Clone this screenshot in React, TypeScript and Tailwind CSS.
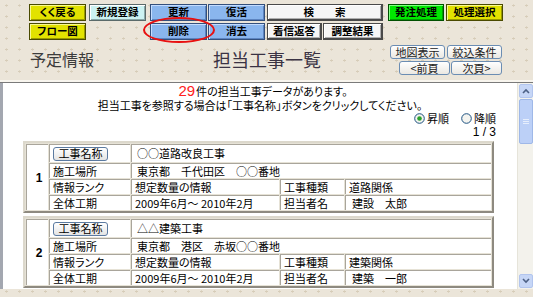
import React from 'react';

const yellow =
  'bg-[#e2e200] border-[#4a4a00] shadow-[inset_1px_1px_0_#f8f890,inset_-1px_-1px_0_#9a9a00]';
const cyan =
  'bg-[#ccf2f2] border-[#5a6a6a] shadow-[inset_1px_1px_0_#ffffff,inset_-1px_-1px_0_#8aa8a8]';
const blue =
  'bg-[#8ab6ee] border-[#34507c] shadow-[inset_1px_1px_0_#c4dcff,inset_-1px_-1px_0_#5c84c0]';
const gray =
  'bg-[#f6f6f6] border-[#4a4a4a] border-r-2 border-b-2 shadow-[inset_1px_1px_0_#ffffff,inset_-1px_-1px_0_#b0b0b0]';
const green =
  'bg-[#00e800] border-[#005000] shadow-[inset_1px_1px_0_#80ff80,inset_-1px_-1px_0_#00a000]';

const Btn: React.FC<{ className: string; children: React.ReactNode }> = ({ className, children }) => (
  <div
    className={`h-[17px] flex items-center justify-center border text-[10.5px] font-bold leading-none text-black whitespace-nowrap ${className}`}
  >
    {children}
  </div>
);

const SmallBtn: React.FC<{ className: string; children: React.ReactNode }> = ({ className, children }) => (
  <div
    className={`h-[14px] flex items-center justify-center rounded-[3px] border border-[#6b8db3] bg-gradient-to-b from-white to-[#ebe8e2] text-[11px] leading-none text-[#222] ${className}`}
  >
    {children}
  </div>
);

const Radio: React.FC<{ checked?: boolean }> = ({ checked }) => (
  <svg width="11" height="11" viewBox="0 0 11 11">
    <circle cx="5.5" cy="5.5" r="4.8" fill="#f4f4f0" stroke="#1c5180" strokeWidth="1" />
    {checked && <circle cx="5.5" cy="5.5" r="2.3" fill="#2aa22a" />}
  </svg>
);

const data = [
  { no: 1, name: '○○道路改良工事', place: '東京都　千代田区　○○番地', kind: '道路関係', person: '建設　太郎' },
  { no: 2, name: '△△建築工事', place: '東京都　港区　赤坂○○番地', kind: '建築関係', person: '建築　一郎' },
];

const td = 'bg-white border-t border-l border-[#a9a59b] p-0 pl-[3px] text-[11px] leading-none align-middle whitespace-nowrap overflow-hidden';

const WorkTable: React.FC<{ row: (typeof data)[number] }> = ({ row }) => (
  <table className="table-fixed border-separate border-spacing-[1px] w-[471px] bg-[#e6e2d6] border-2 border-t-[#dcd8cc] border-l-[#dcd8cc] border-b-[#8e8a80] border-r-[#8e8a80]">
    <colgroup>
      <col className="w-[22px]" />
      <col className="w-[81px]" />
      <col className="w-[148px]" />
      <col className="w-[64px]" />
      <col />
    </colgroup>
    <tbody>
      <tr className="h-[18px]">
        <td rowSpan={4} className={`${td} pl-0 text-center font-bold text-[12px] font-['Liberation_Sans',sans-serif]`}>
          {row.no}
        </td>
        <td className={`${td} pl-[2px]`}>
          <div className="w-[55px] h-[14px] flex items-center justify-center rounded-[3px] border border-[#5b7aa0] bg-gradient-to-b from-white to-[#e4e4e4] text-[11px] leading-none">
            工事名称
          </div>
        </td>
        <td colSpan={3} className={`${td} pl-[5px]`}>
          {row.name}
        </td>
      </tr>
      <tr className="h-[15px]">
        <td className={td}>施工場所</td>
        <td colSpan={3} className={`${td} pl-[5px]`}>
          {row.place}
        </td>
      </tr>
      <tr className="h-[15px]">
        <td className={td}>情報ランク</td>
        <td className={td}>想定数量の情報</td>
        <td className={td}>工事種類</td>
        <td className={td}>{row.kind}</td>
      </tr>
      <tr className="h-[15px]">
        <td className={td}>全体工期</td>
        <td className={`${td} pl-[1px]`}>2009年6月～ 2010年2月</td>
        <td className={td}>担当者名</td>
        <td className={`${td} pl-[6px]`}>{row.person}</td>
      </tr>
    </tbody>
  </table>
);

export default function App() {
  return (
    <div className="w-[533px] h-[297px] overflow-hidden bg-[#ebe5d9] bg-[radial-gradient(#d6ccb8_1px,transparent_1.5px)] bg-[length:13px_11px] font-['Noto_Sans_CJK_JP','Liberation_Sans',sans-serif] [font-feature-settings:'palt'] text-black">
      {/* header */}
      <div className="relative h-[80px]">
        <div className="flex pl-[29px] pt-[4px] h-[42px]">
          <div className="flex flex-col gap-[2px] w-[57px]">
            <Btn className={yellow}>くく戻る</Btn>
            <Btn className={yellow}>フロー図</Btn>
          </div>
          <div className="ml-[3px] w-[57px]">
            <Btn className={cyan}>新規登録</Btn>
          </div>
          <div className="ml-[4px] grid grid-cols-[57px_57px] auto-rows-[17px] gap-x-[1px] gap-y-[2px]">
            <Btn className={blue}>更新</Btn>
            <Btn className={blue}>復活</Btn>
            <Btn className={blue}>削除</Btn>
            <Btn className={blue}>消去</Btn>
          </div>
          <div className="ml-[2px] flex flex-col gap-[2px]">
            <Btn className={`w-[116px] ${gray}`}>検　　索</Btn>
            <div className="flex gap-[1px]">
              <Btn className={`w-[55px] ${gray}`}>着信返答</Btn>
              <Btn className={`w-[60px] ${gray}`}>調整結果</Btn>
            </div>
          </div>
          <div className="ml-[5px] flex gap-[2px] items-start">
            <Btn className={`w-[56px] ${green}`}>発注処理</Btn>
            <Btn className={`w-[57px] ${yellow}`}>処理選択</Btn>
          </div>
        </div>
        <div className="absolute left-[143px] top-[17px] w-[72px] h-[26px] rounded-[50%] border-[2.5px] border-[#e81010] pointer-events-none" />
        <div className="flex h-[38px] items-start">
          <div className="pl-[30px] w-[213px] pt-[8px] text-[16px] leading-[18px] text-[#3c3c3c]">予定情報</div>
          <div className="pt-[7px] text-[18px] leading-[20px] text-[#3a3344]">担当工事一覧</div>
          <div className="ml-auto mr-[31px] pt-[3px] flex flex-col items-end gap-[2px]">
            <div className="flex gap-[2px]">
              <SmallBtn className="w-[55px]">地図表示</SmallBtn>
              <SmallBtn className="w-[55px]">絞込条件</SmallBtn>
            </div>
            <div className="flex gap-[1px]">
              <SmallBtn className="w-[51px]">&lt;前頁</SmallBtn>
              <SmallBtn className="w-[51px]">次頁&gt;</SmallBtn>
            </div>
          </div>
        </div>
      </div>
      <div className="h-[2px] bg-[#f8f5ee]" />
      <div className="h-[1px] bg-[#7a7a7a]" />

      {/* content */}
      <div className="flex h-[206px]">
        <div className="w-[3px] bg-[#a3a7b0]" />
        <div className="flex-1 bg-white overflow-hidden pt-[1px]">
          <div className="h-[14px] flex items-center justify-center text-[11px] leading-[14px] pl-[6px]">
            <span className="text-[15px] leading-[14px] text-[#ff2020] mr-[1px] font-['Liberation_Sans',sans-serif]">29</span>
            <span>件の担当工事データがあります。</span>
          </div>
          <div className="h-[14px] flex items-center justify-center text-[11px] leading-[14px]">
            担当工事を参照する場合は「工事名称」ボタンをクリックしてください。
          </div>
          <div className="h-[13px] flex items-center justify-end pr-[21px] text-[11px] leading-[13px] gap-[2px]">
            <Radio checked />
            <span className="mr-[10px]">昇順</span>
            <Radio />
            <span>降順</span>
          </div>
          <div className="h-[14px] flex items-end justify-end pr-[21px] text-[12px] leading-[13px] font-['Liberation_Sans',sans-serif]">1 / 3</div>
          <div className="ml-[20px] mt-[2px] flex flex-col gap-[3px]">
            {data.map((r) => (
              <WorkTable key={r.no} row={r} />
            ))}
          </div>
        </div>
        {/* scrollbar */}
        <div className="w-[16px] bg-[#f3f2ec] border-l border-[#e6e4da] flex flex-col items-center py-[1px]">
          <div className="w-[14px] h-[14px] rounded-[2px] bg-[#c6d6f6] border border-[#b2c5ee] flex items-center justify-center">
            <svg width="8" height="6" viewBox="0 0 8 6">
              <path d="M1 5 L4 2 L7 5" fill="none" stroke="#4d6185" strokeWidth="1.6" />
            </svg>
          </div>
          <div className="mt-[1px] w-[14px] h-[45px] rounded-[2px] bg-[#bcd0f7] border border-[#9fb8e8] flex flex-col items-center justify-center gap-[1px]">
            <div className="w-[6px] h-[1px] bg-[#e6eefc]" />
            <div className="w-[6px] h-[1px] bg-[#e6eefc]" />
            <div className="w-[6px] h-[1px] bg-[#e6eefc]" />
          </div>
          <div className="flex-1" />
          <div className="w-[14px] h-[14px] rounded-[2px] bg-[#c6d6f6] border border-[#b2c5ee] flex items-center justify-center">
            <svg width="8" height="6" viewBox="0 0 8 6">
              <path d="M1 1 L4 4 L7 1" fill="none" stroke="#4d6185" strokeWidth="1.6" />
            </svg>
          </div>
        </div>
      </div>
    </div>
  );
}
